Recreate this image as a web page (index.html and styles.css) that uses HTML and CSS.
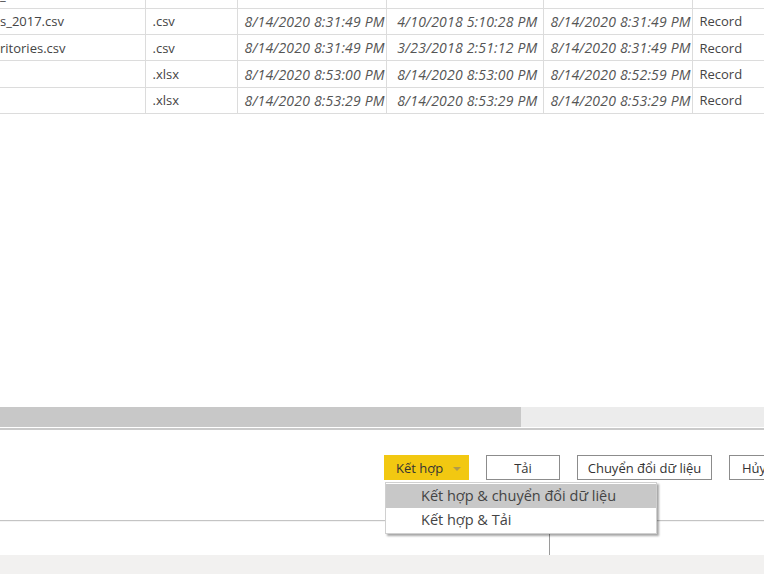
FILE: index.html
```html
<!DOCTYPE html>
<html lang="vi">

<head>
    <meta charset="UTF-8">
    <title>Kết hợp tệp</title>
    <link rel="stylesheet" href="styles.css">
</head>

<body>
    <div class="preview">
        <table class="files">
            <colgroup>
                <col class="colName">
                <col class="colExt">
                <col class="colDate1">
                <col class="colDate2">
                <col class="colDate3">
                <col class="colAttr">
            </colgroup>
            <tr>
                <td class="name">_</td>
                <td></td>
                <td class="date">8/14/2020 8:31:49 PM</td>
                <td class="date">4/10/2018 5:10:28 PM</td>
                <td class="date">8/14/2020 8:31:49 PM</td>
                <td></td>
            </tr>
            <tr>
                <td class="name">s_2017.csv</td>
                <td>.csv</td>
                <td class="date">8/14/2020 8:31:49 PM</td>
                <td class="date">4/10/2018 5:10:28 PM</td>
                <td class="date">8/14/2020 8:31:49 PM</td>
                <td>Record</td>
            </tr>
            <tr>
                <td class="name">ritories.csv</td>
                <td>.csv</td>
                <td class="date">8/14/2020 8:31:49 PM</td>
                <td class="date">3/23/2018 2:51:12 PM</td>
                <td class="date">8/14/2020 8:31:49 PM</td>
                <td>Record</td>
            </tr>
            <tr>
                <td class="name"></td>
                <td>.xlsx</td>
                <td class="date">8/14/2020 8:53:00 PM</td>
                <td class="date">8/14/2020 8:53:00 PM</td>
                <td class="date">8/14/2020 8:52:59 PM</td>
                <td>Record</td>
            </tr>
            <tr>
                <td class="name"></td>
                <td>.xlsx</td>
                <td class="date">8/14/2020 8:53:29 PM</td>
                <td class="date">8/14/2020 8:53:29 PM</td>
                <td class="date">8/14/2020 8:53:29 PM</td>
                <td>Record</td>
            </tr>
        </table>
    </div>
    <div class="hscroll">
        <div class="thumb"></div>
    </div>
    <div class="footer">
        <div class="buttons">
            <div class="splitWrap">
                <button class="btn primary">Kết hợp <span class="caret"></span></button>
                <div class="menu">
                    <div class="menuItem active">Kết hợp &amp; chuyển đổi dữ liệu</div>
                    <div class="menuItem">Kết hợp &amp; Tải</div>
                </div>
            </div>
            <button class="btn load">Tải</button>
            <button class="btn transform">Chuyển đổi dữ liệu</button>
            <button class="btn cancel">Hủy</button>
        </div>
    </div>
    <div class="status">
        <div class="statusLeft"></div>
        <div class="statusRight"></div>
    </div>
    <div class="bottomBar"></div>
</body>

</html>
```

FILE: styles.css
```css
* {
    box-sizing: border-box;
}

body {
    margin: 0;
    width: 764px;
    height: 574px;
    overflow: hidden;
    background: #fff;
    font-family: "Open Sans", "Noto Sans", sans-serif;
    color: #444;
}

.preview {
    height: 402px;
    overflow: hidden;
}

.files {
    border-collapse: collapse;
    table-layout: fixed;
    width: 841px;
    margin-top: -18px;
    font-size: 13px;
}

.colName { width: 145px; }
.colExt { width: 92px; }
.colDate1 { width: 149px; }
.colDate2 { width: 157px; }
.colDate3 { width: 149px; }
.colAttr { width: 149px; }

.files td {
    height: 26.3px;
    padding: 0 6px 0 7px;
    border-bottom: 1px solid #dcdcdc;
    border-right: 1px solid #dcdcdc;
    white-space: nowrap;
    overflow: hidden;
}

.files td.name {
    padding-left: 0;
}

.files td.date {
    font-style: italic;
    font-size: 14px;
    letter-spacing: 0.2px;
    color: #555;
    text-align: right;
    padding-right: 5px;
}

.hscroll {
    margin-top: 5px;
    height: 20px;
    background: #ececec;
}

.thumb {
    width: 521px;
    height: 100%;
    background: #c8c8c8;
}

.footer {
    margin-top: 1px;
    border-top: 2px solid #cacaca;
    height: 93px;
    border-bottom: 1px solid #c4c4c4;
    padding-top: 25px;
}

.buttons {
    display: flex;
    gap: 17px;
    padding-left: 384px;
}

.btn {
    height: 25px;
    font-family: inherit;
    font-size: 13px;
    color: #333;
    background: #fff;
    border: 1px solid #8c8c8c;
    padding: 0;
    flex-shrink: 0;
}

.primary {
    width: 85px;
    background: #f2c811;
    border-color: #f2c811;
    text-align: left;
    padding-left: 11px;
}

.caret {
    display: inline-block;
    margin-left: 6px;
    vertical-align: 2px;
    border-left: 4px solid transparent;
    border-right: 4px solid transparent;
    border-top: 4px solid #b09a4c;
}

.load { width: 74px; }
.transform { width: 135px; }

.cancel {
    width: 74px;
    text-align: left;
    padding-left: 12px;
}

.splitWrap {
    position: relative;
}

.menu {
    position: absolute;
    left: 1px;
    top: 27px;
    width: 272px;
    background: #fff;
    border: 1px solid #d0d0d0;
    padding: 1px 0;
    box-shadow: 2px 2px 2px rgba(0, 0, 0, 0.35);
    z-index: 2;
}

.menuItem {
    height: 24px;
    line-height: 23px;
    padding-left: 35px;
    font-size: 14.5px;
    color: #444;
}

.menuItem.active {
    background: #c8c8c8;
}

.status {
    display: flex;
    height: 34px;
    border-top: 1px solid #f4f4f4;
}

.statusLeft {
    width: 550px;
    border-right: 1px solid #9a9a9a;
}

.bottomBar {
    height: 19px;
    background: #f2f1f0;
}
```
